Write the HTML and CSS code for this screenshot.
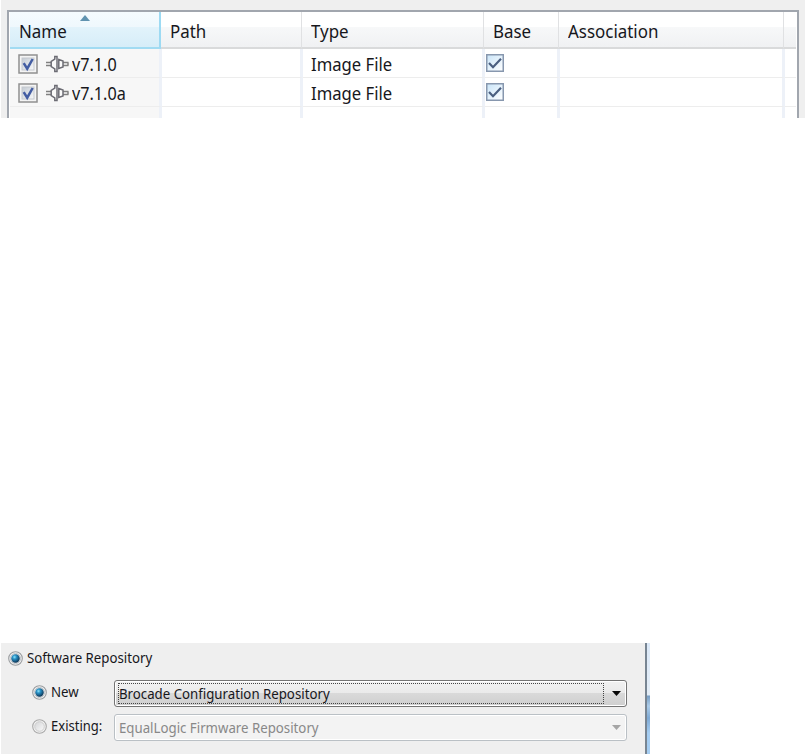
FILE: index.html
```
<!DOCTYPE html>
<html lang="en">
<head>
<meta charset="utf-8">
<title>Software Repository</title>
<link rel="stylesheet" href="styles.css">
</head>
<body>
<svg class="defs" aria-hidden="true">
  <defs>
    <linearGradient id="box" x1="0" y1="0" x2="1" y2="1"><stop offset="0" stop-color="#c3cad3"/><stop offset="1" stop-color="#f8f9fa"/></linearGradient>
    <linearGradient id="bluebox" x1="0" y1="0" x2="1" y2="1"><stop offset="0" stop-color="#c9e4f8"/><stop offset="1" stop-color="#fff"/></linearGradient>
    <radialGradient id="dot" cx=".38" cy=".33" r=".7"><stop offset="0" stop-color="#8be4fb"/><stop offset=".35" stop-color="#278fc4"/><stop offset="1" stop-color="#0c304f"/></radialGradient>
    <linearGradient id="empty" x1="0" y1="0" x2="1" y2="1"><stop offset="0" stop-color="#d4d5d7"/><stop offset="1" stop-color="#fafafa"/></linearGradient>
    <symbol id="check" viewBox="0 0 20 20"><rect x="1" y="1" width="18" height="18" fill="#f4f4f4" stroke="#909090" stroke-width="1.5"/><rect x="4" y="4" width="12" height="12" fill="url(#box)" stroke="#c4c8ce"/><path d="M5.7 9.2 9.2 14.7 14.7 5" fill="none" stroke="#435da3" stroke-width="2.5"/></symbol>
    <symbol id="basecheck" viewBox="0 0 18 18"><rect x=".75" y=".75" width="16.5" height="16.5" fill="url(#bluebox)" stroke="#8797ae" stroke-width="1.5"/><path d="M3 9 7 13.2 15 4.8" fill="none" stroke="#4b5f80" stroke-width="2.2"/></symbol>
    <symbol id="plug" viewBox="0 0 23 18"><path d="M0 7.4h5.5M0 10.6h5.5M17 7.4h5.5M17 10.6h5.5M22 7.4v3.2" fill="none" stroke="#808080" stroke-width="1.5"/><path d="M8.8 1.5H11V16.5H8.8V14L5.2 11.5V6.5L8.8 4ZM12.8 4.5 17 6V12L12.8 13.5Z" fill="#fafafa" stroke="#6c6c74" stroke-width="1.5"/></symbol>
    <symbol id="radio" viewBox="0 0 15 15"><circle cx="7.5" cy="7.5" r="6.8" fill="#f4f4f4" stroke="#999c9f" stroke-width="1.1"/><circle cx="7.5" cy="7.5" r="5.1" fill="#dce1e5" stroke="#c1c6cb"/><circle cx="7.5" cy="7.5" r="4.2" fill="url(#dot)"/></symbol>
    <symbol id="radio-off" viewBox="0 0 15 15"><circle cx="7.5" cy="7.5" r="6.8" fill="#f4f4f4" stroke="#a9a9a9" stroke-width="1.1"/><circle cx="7.5" cy="7.5" r="4.8" fill="url(#empty)" stroke="#cdcdcd"/></symbol>
  </defs>
</svg>
<section class="table-panel">
  <div class="table">
    <div class="row head">
      <div class="sorted"><span class="t">Name</span><svg class="sort" viewBox="0 0 10 6"><path d="M0 6 5 0 10 6Z" fill="#6093b0"/></svg></div>
      <div><span class="t">Path</span></div><div><span class="t">Type</span></div><div><span class="t">Base</span></div><div><span class="t">Association</span></div><div></div>
    </div>
    <div class="row">
      <div class="item"><svg class="check"><use href="#check"/></svg><svg class="plug"><use href="#plug"/></svg><span class="t version">v7.1.0</span></div>
      <div></div><div><span class="t file">Image File</span></div><div class="bc"><svg><use href="#basecheck"/></svg></div><div></div><div></div>
    </div>
    <div class="row">
      <div class="item"><svg class="check"><use href="#check"/></svg><svg class="plug"><use href="#plug"/></svg><span class="t version">v7.1.0a</span></div>
      <div></div><div><span class="t file">Image File</span></div><div class="bc"><svg><use href="#basecheck"/></svg></div><div></div><div></div>
    </div>
    <div class="row last"><div class="item"></div><div></div><div></div><div></div><div></div><div></div></div>
  </div>
</section>
<section class="repo">
  <div class="form">
    <label class="title"><svg class="radio"><use href="#radio"/></svg><span class="s">Software Repository</span></label>
    <div class="choice"><label><svg class="radio"><use href="#radio"/></svg><span class="s">New</span></label>
      <div class="combo active"><div class="focus"><span class="s">Brocade Configuration Repository</span></div><svg class="arrow" viewBox="0 0 9 5"><path d="M0 0H9L4.5 5Z"/></svg></div></div>
    <div class="choice second"><label><svg class="radio"><use href="#radio-off"/></svg><span class="s existing">Existing:</span></label>
      <div class="combo disabled"><div class="focus"><span class="s">EqualLogic Firmware Repository</span></div><svg class="arrow" viewBox="0 0 9 5"><path d="M0 0H9L4.5 5Z"/></svg></div></div>
  </div>
  <div class="edge"></div>
</section>
</body>
</html>
```
FILE: styles.css
```
* { box-sizing: border-box; }
body { margin: 0; width: 805px; height: 754px; overflow: hidden; background: #fff; color: #17171c; font-family: "Noto Sans", "Open Sans", sans-serif; }
svg { display: block; flex: none; }
.defs { position: absolute; width: 0; height: 0; }
.table-panel { height: 118px; margin-left: 1px; padding: 10px 6px 0; background: #efefef; }
.table { height: 108px; width: 792px; border: 2px solid #a1a6ae; border-bottom: 0; padding: 0 1px; background: #fff; overflow: hidden; }
.row { display: grid; grid-template-columns: 152px 141px 182px 75px 225px 11px; grid-template-rows: 100%; height: 29px; }
.row > div { display: flex; align-items: center; min-width: 0; border-right: 3px solid #edf1f8; border-bottom: 1px solid #ededed; padding-left: 8px; }
.row > div:last-child { border-right: 0; }
.row > .item { background: #f7f7f7; padding-left: 8px; }
.row > .bc { padding-left: 1px; }
.bc svg { width: 18px; height: 18px; }
.head { height: 37px; grid-template-columns: 151px 141px 182px 75px 225px 12px; }
.head > div { padding-left: 9px; border-right: 1px solid #e0e1e3; border-bottom: 2px solid #d9dadb; background: linear-gradient(#fff 0 15px, #f7f8f9 15px, #f0f1f3); }
.head > div.sorted { position: relative; border-right: 2px solid #9ddaf3; border-bottom-color: #a1dbf2; background: linear-gradient(#f5fbfe, #eff8fd 15px, #e2f3fb 15px, #d6edf8); }
.sort { position: absolute; left: 70px; top: 3px; width: 10px; height: 6px; }
.head .t { margin-top: 2px; }
.check { width: 20px; height: 20px; margin-top: 1px; }
.plug { width: 23px; height: 18px; margin: 1px 3px 0 8px; }
.t, .s { white-space: nowrap; transform-origin: left center; }
.t { font-size: 18px; line-height: 28px; transform: scaleX(.94); }
.s { font-size: 14px; line-height: 20px; transform: scaleX(.946); }
.t.version, .t.file { line-height: 26px; margin-top: 2px; }
.t.version { transform: scaleX(.9); }
.t.file { transform: scaleX(.926); }
.repo { display: flex; margin-top: 525px; margin-left: 1px; width: 649px; height: 111px; }
.form { width: 644px; background: #efefef; padding: 5px 0 0 7px; }
.edge { width: 5px; border-left: 2px solid #788592; background: linear-gradient(#dce9f8, #e3edf7 52px, #779dc3 53px, #accce9 63px, #7faad5 75px, #a5cdf2 90px); }
label { display: flex; align-items: center; gap: 4px; }
.title { height: 21px; }
.title .s { margin-top: -1px; }
.radio { width: 15px; height: 15px; }
.choice { display: flex; align-items: center; height: 28px; margin: 10px 0 0 24px; }
.choice.second { margin-top: 6px; }
.choice label { width: 82px; flex: none; height: 20px; margin-top: -2px; }
.combo { display: flex; align-items: center; width: 513px; height: 27px; border: 1px solid #747474; border-radius: 3px; box-shadow: inset 0 0 0 1px #fff; background: linear-gradient(#f2f2f2, #eaeaea 49%, #d9d9d9 50%, #cfcfcf); padding: 3px; }
.focus { display: flex; align-items: center; width: 486px; height: 21px; border: 1px dotted #444; }
.focus .s { margin-top: 1px; }
.disabled { background: #f3f3f3; border-color: #bac0c5; color: #888; }
.disabled .focus { border-color: transparent; }
.arrow { width: 9px; height: 5px; margin-left: 8px; fill: #080808; }
.disabled .arrow { fill: #a5a5a5; }
.s.existing { transform: scaleX(.93); }
```
